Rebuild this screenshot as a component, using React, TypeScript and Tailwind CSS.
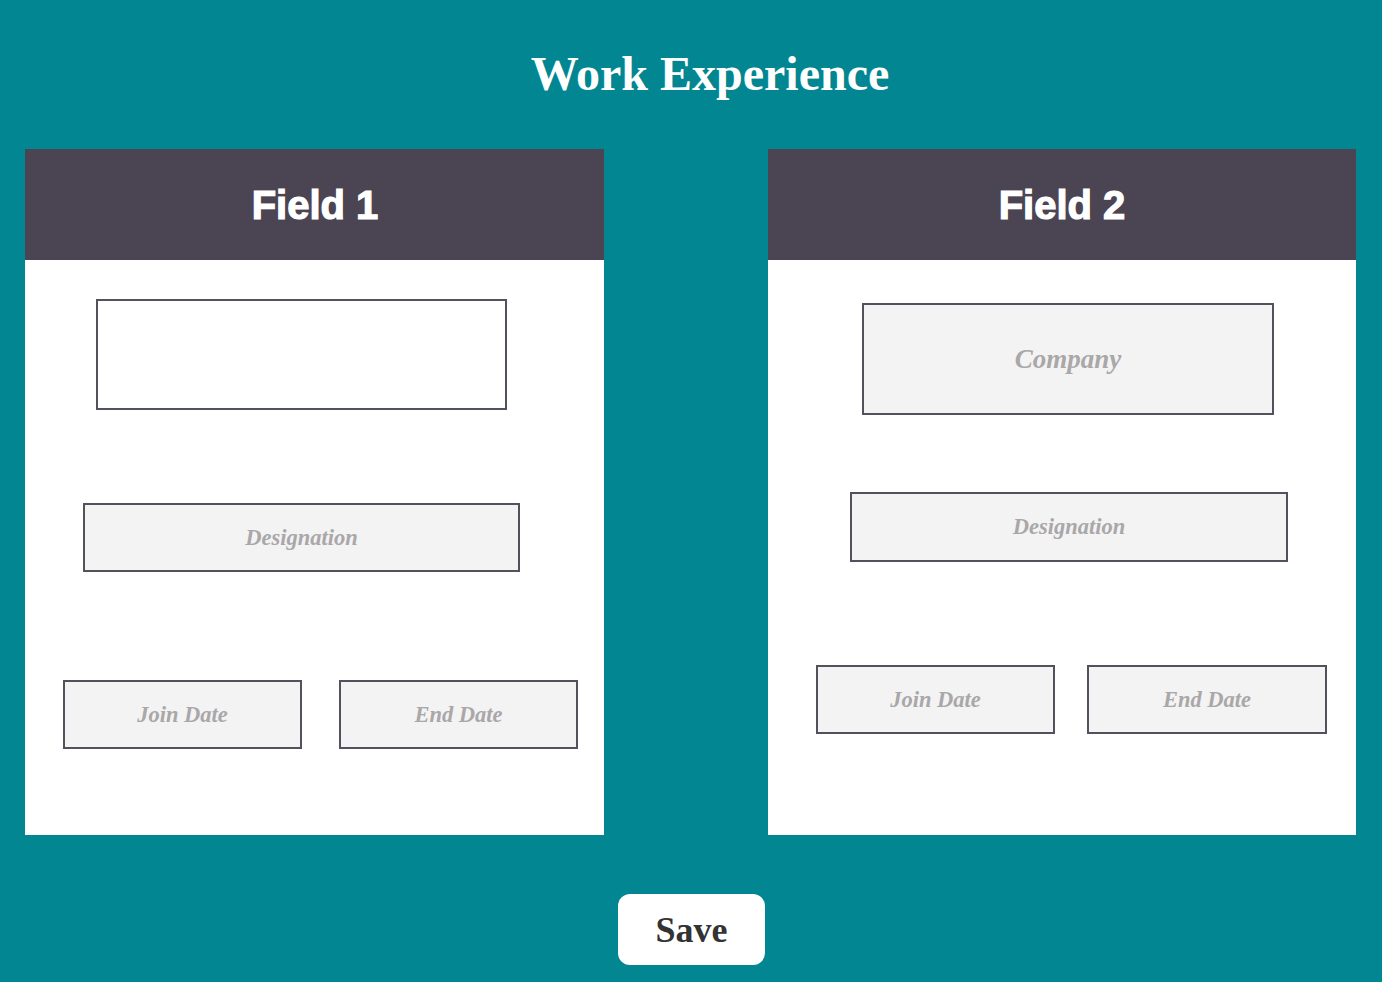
import React from "react";

const serif = { fontFamily: '"Liberation Serif", "Times New Roman", serif' } as const;
const sans = { fontFamily: '"Liberation Sans", Arial, sans-serif' } as const;

function Box({ label, className, big }: { label?: string; className: string; big?: boolean }) {
  return (
    <div
      className={`border-2 border-[#55505d] flex items-center justify-center italic font-bold text-[#aaa7a9] ${big ? "text-[27px]" : "text-[22.5px]"} ${className}`}
      style={serif}
    >
      {label}
    </div>
  );
}

export default function App() {
  return (
    <div className="w-[1382px] h-[982px] bg-[#028692] flex flex-col overflow-hidden">
      <h1
        className="text-white font-bold text-[48px] leading-none text-center pt-[50px] pl-[38px]"
        style={serif}
      >
        Work Experience
      </h1>
      <div className="flex justify-between pl-[25px] pr-[26px] mt-[51px]">
        <div className="w-[579px] h-[686px] bg-white flex flex-col">
          <div
            className="h-[111px] bg-[#4b4553] flex items-center justify-center text-white font-bold text-[40px] pl-[1px] [-webkit-text-stroke:1.2px_white]"
            style={sans}
          >
            Field 1
          </div>
          <div className="flex flex-col">
            <Box className="mt-[39px] ml-[71px] w-[411px] h-[111px] bg-white" />
            <Box label="Designation" className="mt-[93px] ml-[58px] w-[437px] h-[69px] bg-[#f3f3f3]" />
            <div className="flex mt-[108px] ml-[38px] gap-[37px]">
              <Box label="Join Date" className="w-[239px] h-[69px] bg-[#f3f3f3]" />
              <Box label="End Date" className="w-[239px] h-[69px] bg-[#f3f3f3]" />
            </div>
          </div>
        </div>
        <div className="w-[588px] h-[686px] bg-white flex flex-col">
          <div
            className="h-[111px] bg-[#4b4553] flex items-center justify-center text-white font-bold text-[40px] [-webkit-text-stroke:1.2px_white]"
            style={sans}
          >
            Field 2
          </div>
          <div className="flex flex-col">
            <Box label="Company" big className="mt-[43px] ml-[94px] w-[412px] h-[112px] bg-[#f3f3f3]" />
            <Box label="Designation" className="mt-[77px] ml-[82px] w-[438px] h-[70px] bg-[#f3f3f3]" />
            <div className="flex mt-[103px] ml-[48px] gap-[32px]">
              <Box label="Join Date" className="w-[239px] h-[69px] bg-[#f3f3f3]" />
              <Box label="End Date" className="w-[240px] h-[69px] bg-[#f3f3f3]" />
            </div>
          </div>
        </div>
      </div>
      <div className="flex justify-center mt-[59px] pl-[1px]">
        <button
          className="w-[147px] h-[71px] bg-white rounded-[12px] text-[#333333] font-bold text-[36px] flex items-center justify-center"
          style={serif}
        >
          Save
        </button>
      </div>
    </div>
  );
}
